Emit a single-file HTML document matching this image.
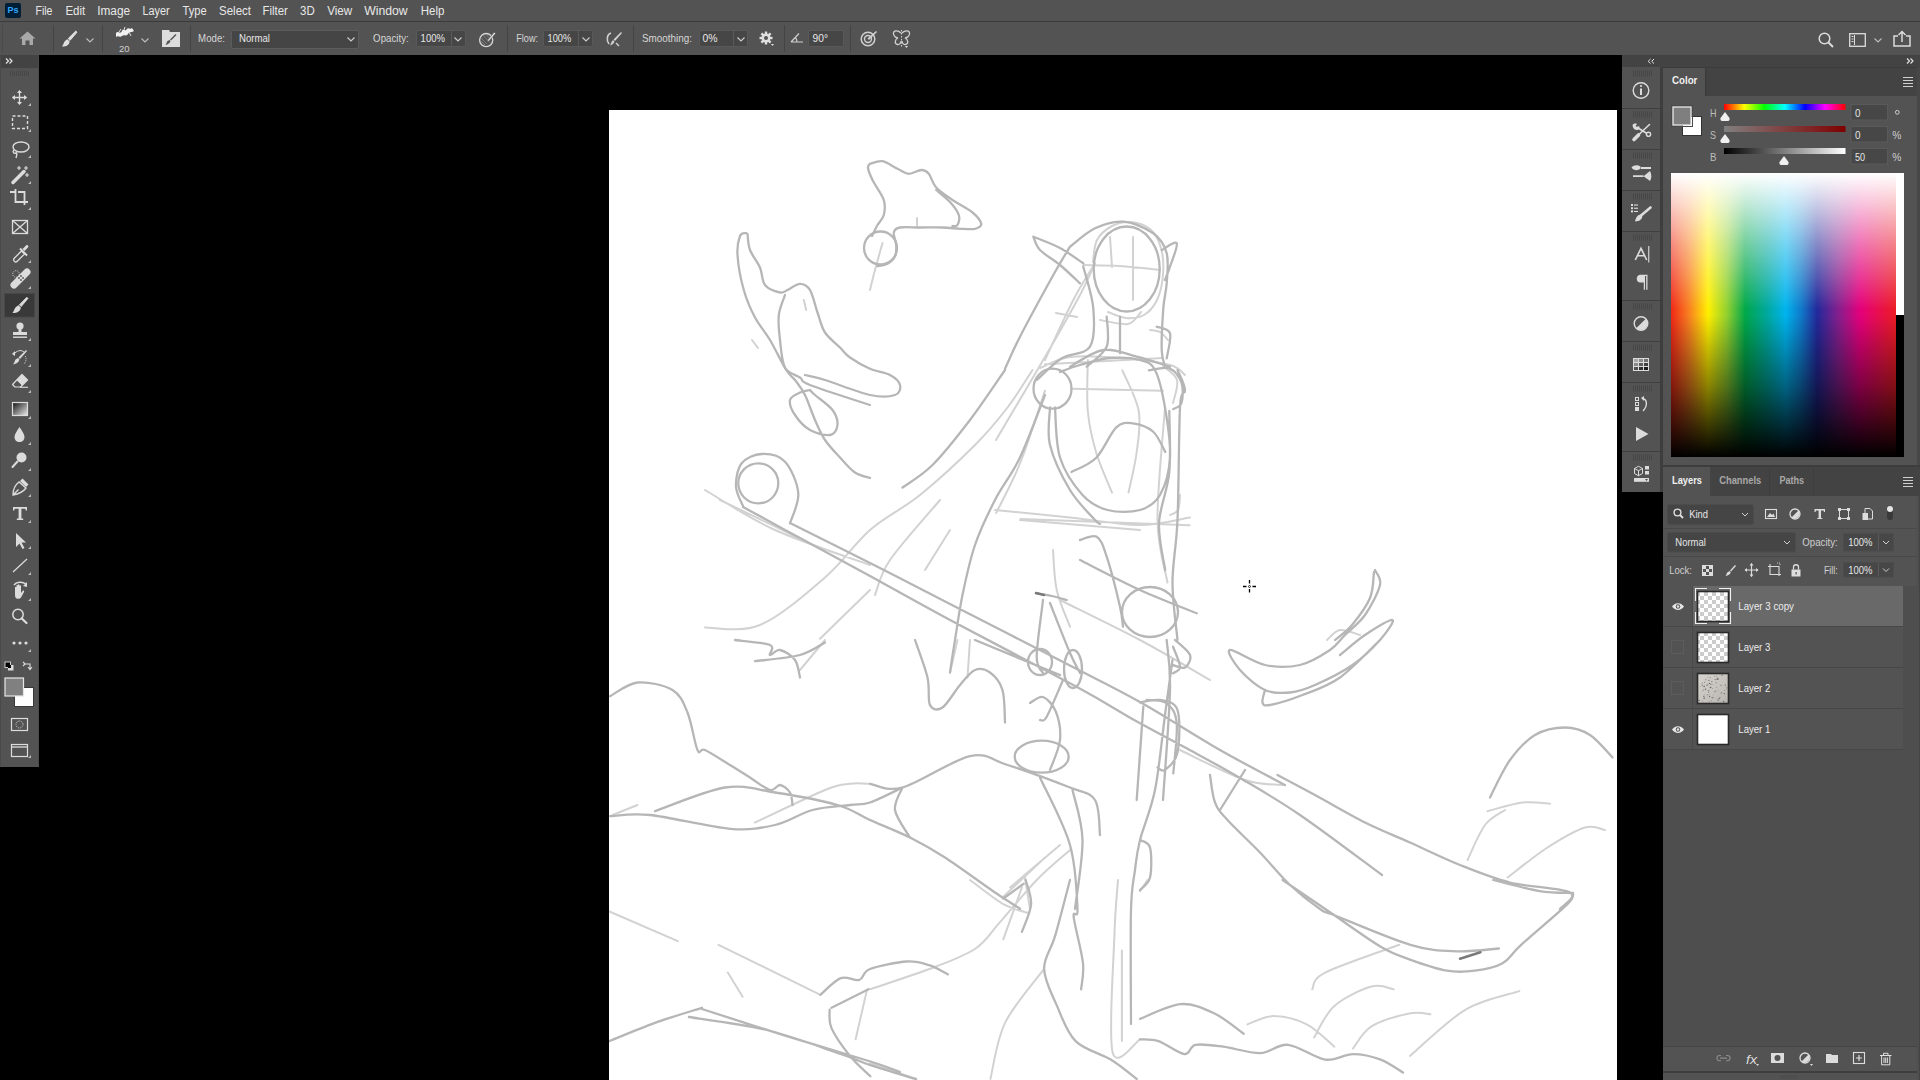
<!DOCTYPE html>
<html><head><meta charset="utf-8">
<style>
*{margin:0;padding:0;box-sizing:border-box}
html,body{width:1920px;height:1080px;overflow:hidden;background:#000;font-family:"Liberation Sans",sans-serif;}
.a{position:absolute}
#menubar{left:0;top:0;width:1920px;height:21px;background:#535353}
#menubar span{position:absolute;top:4px;font-size:12.5px;color:#e8e8e8;line-height:14px}
#sepline{left:0;top:21px;width:1920px;height:1px;background:#3b3b3b}
#opts{left:0;top:22px;width:1920px;height:33px;background:#535353}
.vsep{position:absolute;top:3px;width:1px;height:27px;background:#444}
.lbl{position:absolute;font-size:11.5px;color:#d6d6d6;line-height:13px}
.box{position:absolute;background:#454545;border:1px solid #4a4a4a;border-radius:2px}
#tools{left:0;top:55px;width:38px;height:711px;background:#535353}
#toolshead{left:0;top:55px;width:38px;height:12px;background:#434343}
#strip{left:1622px;top:55px;width:38px;height:437px;background:#535353}
#striphead{left:1622px;top:55px;width:298px;height:12px;background:#434343}
#panel{left:1663px;top:67px;width:257px;height:1013px;background:#535353}
.tabhdr{position:absolute;background:#434343}
.tabx{position:absolute;font-size:11px;line-height:13px;color:#a9a9a9;font-weight:bold}
</style></head><body>
<!-- menu -->
<div id="menubar" class="a">
  <div class="a" style="left:5px;top:3px;width:16px;height:15px;background:#001e36;border-radius:2px"></div>
  <div class="a" style="left:6px;top:4px;width:14px;font-size:9px;font-weight:bold;color:#31a8ff;line-height:13px;text-align:center">Ps</div>
<svg class="a" style="left:0;top:0" width="460" height="21"><g font-family="Liberation Sans" font-size="12.5" fill="#e8e8e8"><text x="35.5" y="15" textLength="16.9" lengthAdjust="spacingAndGlyphs">File</text><text x="65.4" y="15" textLength="19.8" lengthAdjust="spacingAndGlyphs">Edit</text><text x="97.2" y="15" textLength="33" lengthAdjust="spacingAndGlyphs">Image</text><text x="142.5" y="15" textLength="27.2" lengthAdjust="spacingAndGlyphs">Layer</text><text x="182.5" y="15" textLength="24.1" lengthAdjust="spacingAndGlyphs">Type</text><text x="219" y="15" textLength="32" lengthAdjust="spacingAndGlyphs">Select</text><text x="262.5" y="15" textLength="25.3" lengthAdjust="spacingAndGlyphs">Filter</text><text x="300" y="15" textLength="14.7" lengthAdjust="spacingAndGlyphs">3D</text><text x="327.2" y="15" textLength="25" lengthAdjust="spacingAndGlyphs">View</text><text x="364.2" y="15" textLength="43.5" lengthAdjust="spacingAndGlyphs">Window</text><text x="420.7" y="15" textLength="23.7" lengthAdjust="spacingAndGlyphs">Help</text></g></svg>
</div>
<div id="sepline" class="a"></div>
<div id="opts" class="a">
  <div class="vsep" style="left:2px;background:#4a4a4a"></div>
  <svg class="a" style="left:19px;top:9px" width="17" height="15" viewBox="0 0 17 15"><path d="M8.5 0.5 L16.5 7.5 L14 7.5 L14 14 L10.5 14 L10.5 9.5 L6.5 9.5 L6.5 14 L3 14 L3 7.5 L0.5 7.5 Z" fill="#a8a8a8"/></svg>
  <div class="vsep" style="left:53px"></div>
  <svg class="a" style="left:61px;top:8px" width="17" height="17" viewBox="0 0 17 17"><path d="M14.8 1 L16 2.2 L9 10.4 L7.2 8.6 Z" fill="#e0e0e0" stroke="#e0e0e0" stroke-width="0.9" stroke-linejoin="round"/><path d="M6.4 9.2 L8.6 11.4 C8.4 14.6 5.6 16.6 1 16.6 C2.2 15.2 2.6 12.8 3.8 11.3 C4.6 10.3 5.4 9.5 6.4 9.2 Z" fill="#e0e0e0"/></svg>
  <svg class="a" style="left:86px;top:16px" width="8" height="5" viewBox="0 0 8 5"><path d="M0.5 0.5 L4 4 L7.5 0.5" stroke="#bdbdbd" stroke-width="1.1" fill="none"/></svg>
  <div class="vsep" style="left:102px"></div>
  <svg class="a" style="left:115px;top:4px" width="20" height="13" viewBox="0 0 20 13"><path d="M1 7 C3 4 5 9 7 5 C8 2 10 6 12 3 C13 1 15 4 17 2 L19 5 C16 7 15 5 13 8 C11 11 9 8 7 10 C5 12 3 9 1 11 Z" fill="#f0f0f0"/><path d="M4 6 L6 3 M9 4 L10 1 M14 6 L16 10" stroke="#e0e0e0" stroke-width="1"/></svg>
  <div class="a" style="left:119px;top:22px;font-size:9.5px;color:#d0d0d0;line-height:10px">20</div>
  <svg class="a" style="left:141px;top:16px" width="8" height="5" viewBox="0 0 8 5"><path d="M0.5 0.5 L4 4 L7.5 0.5" stroke="#bdbdbd" stroke-width="1.1" fill="none"/></svg>
  <svg class="a" style="left:162px;top:8px" width="18" height="17" viewBox="0 0 18 17"><path d="M0 0 L7 0 L8 2 L18 2 L18 17 L0 17 Z" fill="#dcdcdc"/><path d="M13.5 4 L14.5 5 L9 10.5 L8 9.5 Z" fill="#555"/><path d="M7.5 10 L8.5 11 C8 13 6 14.5 3.5 15 C4.5 14 4.5 12 5.5 11 C6 10.5 6.8 10.2 7.5 10 Z" fill="#555"/></svg>
  <div class="vsep" style="left:190px"></div>
  <div class="box" style="left:231px;top:8px;width:128px;height:19px;background:#454545;border-color:#5c5c5c"></div>
  <svg class="a" style="left:347px;top:15px" width="8" height="5" viewBox="0 0 8 5"><path d="M0.5 0.5 L4 4 L7.5 0.5" stroke="#cfcfcf" stroke-width="1.1" fill="none"/></svg>
  <div class="box" style="left:416px;top:7.5px;width:50px;height:17px;background:#464646;border-color:#595959"></div>
  <div class="a" style="left:451px;top:9px;width:1px;height:15px;background:#5a5a5a"></div>
  <svg class="a" style="left:454px;top:15px" width="8" height="5" viewBox="0 0 8 5"><path d="M0.5 0.5 L4 4 L7.5 0.5" stroke="#cfcfcf" stroke-width="1.1" fill="none"/></svg>
  <svg class="a" style="left:477px;top:8px" width="20" height="19" viewBox="0 0 20 19"><circle cx="9.2" cy="10.1" r="6.6" stroke="#d6d6d6" stroke-width="1.3" fill="none"/><g stroke="#9a9a9a" stroke-width="0.6"><path d="M4 8 L10 14 M4 11 L8 15 M6 5.5 L13 12.5 M9 4.5 L14 9.5"/></g><path d="M17.2 2.2 L18.6 3.6 L12 11 L10.2 11.8 L10.8 9.8 Z" fill="#e0e0e0" stroke="#535353" stroke-width="0.5"/></svg>
  <div class="vsep" style="left:507px"></div>
  <div class="box" style="left:543px;top:7.5px;width:50px;height:17px;background:#464646;border-color:#595959"></div>
  <div class="a" style="left:578px;top:9px;width:1px;height:15px;background:#5a5a5a"></div>
  <svg class="a" style="left:582px;top:15px" width="8" height="5" viewBox="0 0 8 5"><path d="M0.5 0.5 L4 4 L7.5 0.5" stroke="#cfcfcf" stroke-width="1.1" fill="none"/></svg>
  <svg class="a" style="left:605px;top:9px" width="18" height="16" viewBox="0 0 18 16"><path d="M6 2 C2 3 1 9 4 13" stroke="#d0d0d0" stroke-width="1.6" fill="none"/><path d="M16 1 L17 2 L10 10 L8.5 8.5 Z" fill="#d0d0d0"/><path d="M8 9 L9.5 10.5 C9 12.5 7 14 5 14.5 C5.8 13.5 6 11.5 6.8 10.5 Z" fill="#d0d0d0"/><path d="M11 12 L14 15" stroke="#d0d0d0" stroke-width="1.4"/></svg>
  <div class="vsep" style="left:633px"></div>
  <div class="box" style="left:699px;top:7.5px;width:49px;height:17px;background:#464646;border-color:#595959"></div>
  <div class="a" style="left:733px;top:9px;width:1px;height:15px;background:#5a5a5a"></div>
  <svg class="a" style="left:737px;top:15px" width="8" height="5" viewBox="0 0 8 5"><path d="M0.5 0.5 L4 4 L7.5 0.5" stroke="#cfcfcf" stroke-width="1.1" fill="none"/></svg>
  <svg class="a" style="left:759px;top:9px" width="16" height="16" viewBox="0 0 16 16"><g fill="#e0e0e0"><circle cx="7" cy="7" r="4.5"/><rect x="5.8" y="0.5" width="2.4" height="13"/><rect x="0.5" y="5.8" width="13" height="2.4"/><rect x="5.8" y="0.5" width="2.4" height="13" transform="rotate(45 7 7)"/><rect x="5.8" y="0.5" width="2.4" height="13" transform="rotate(-45 7 7)"/></g><circle cx="7" cy="7" r="2" fill="#535353"/><path d="M12 13 L15 13 L13.5 15 Z" fill="#e0e0e0"/></svg>
  <div class="vsep" style="left:784px"></div>
  <svg class="a" style="left:790px;top:10px" width="14" height="11" viewBox="0 0 14 11"><path d="M1 10 L13 10 M1 10 L9 1.5 M7 10 C7 7.5 6 6 5 5.2" stroke="#d0d0d0" stroke-width="1.2" fill="none"/></svg>
  <div class="box" style="left:808px;top:7.5px;width:36px;height:17px;background:#464646;border-color:#595959"></div>
  <div class="vsep" style="left:850px"></div>
  <svg class="a" style="left:860px;top:8px" width="18" height="17" viewBox="0 0 18 17"><circle cx="8" cy="9" r="6.8" stroke="#d0d0d0" stroke-width="1.5" fill="none"/><circle cx="8" cy="9" r="3.5" stroke="#d0d0d0" stroke-width="1.4" fill="none"/><path d="M16 1 L17 2 L9 10 L7.5 8.5 Z" fill="#d0d0d0"/></svg>
  <svg class="a" style="left:892px;top:8px" width="19" height="18" viewBox="0 0 19 18"><path d="M9 3 C6 0 1 0 1.5 4 C2 7 5 8 6 8 C3 9 2 14 5.5 14.5 C7.5 15 9 13 9 11" stroke="#d0d0d0" stroke-width="1.3" fill="none"/><path d="M10 3 C13 0 18 0 17.5 4 C17 7 14 8 13 8 C16 9 17 14 13.5 14.5 C11.5 15 10 13 10 11" stroke="#d0d0d0" stroke-width="1.3" fill="none"/><path d="M9.5 0 L9.5 17" stroke="#d0d0d0" stroke-width="1" stroke-dasharray="1.5 1.5"/><path d="M13 16 L16 16 L14.5 18 Z" fill="#e0e0e0"/></svg>
  <svg class="a" style="left:1818px;top:10px" width="16" height="16" viewBox="0 0 16 16"><circle cx="6.5" cy="6.5" r="5.3" stroke="#dcdcdc" stroke-width="1.5" fill="none"/><path d="M10.5 10.5 L15 15" stroke="#dcdcdc" stroke-width="2"/></svg>
  <svg class="a" style="left:1849px;top:11px" width="17" height="14" viewBox="0 0 17 14"><rect x="0.7" y="0.7" width="15.6" height="12.6" stroke="#dcdcdc" stroke-width="1.3" fill="none"/><path d="M2.5 3.5 L4.5 3.5 M2.5 6 L4.5 6 M2.5 8.5 L4.5 8.5 M5.5 2 L5.5 12" stroke="#dcdcdc" stroke-width="1"/></svg>
  <svg class="a" style="left:1874px;top:16px" width="8" height="5" viewBox="0 0 8 5"><path d="M0.5 0.5 L4 4 L7.5 0.5" stroke="#bdbdbd" stroke-width="1.1" fill="none"/></svg>
  <svg class="a" style="left:1893px;top:8px" width="18" height="17" viewBox="0 0 18 17"><path d="M5 6 L1 6 L1 16 L17 16 L17 6 L13 6" stroke="#dcdcdc" stroke-width="1.5" fill="none"/><path d="M9 12 L9 1.5 M5.5 5 L9 1.5 L12.5 5" stroke="#dcdcdc" stroke-width="1.5" fill="none"/></svg>
  <svg class="a" style="left:0;top:0" width="900" height="33"><g font-family="Liberation Sans" font-size="10.4"><text x="198.1" y="20" textLength="26.9" lengthAdjust="spacingAndGlyphs" fill="#d6d6d6">Mode:</text><text x="239" y="20" textLength="31" lengthAdjust="spacingAndGlyphs" fill="#e6e6e6">Normal</text><text x="373.1" y="20" textLength="35.6" lengthAdjust="spacingAndGlyphs" fill="#d6d6d6">Opacity:</text><text x="420.6" y="20" textLength="24.4" lengthAdjust="spacingAndGlyphs" fill="#e6e6e6">100%</text><text x="516.25" y="20" textLength="21.75" lengthAdjust="spacingAndGlyphs" fill="#d6d6d6">Flow:</text><text x="547.5" y="20" textLength="23.75" lengthAdjust="spacingAndGlyphs" fill="#e6e6e6">100%</text><text x="642" y="20" textLength="50" lengthAdjust="spacingAndGlyphs" fill="#d6d6d6">Smoothing:</text><text x="702.5" y="20" textLength="15" lengthAdjust="spacingAndGlyphs" fill="#e6e6e6">0%</text><text x="812.5" y="20" textLength="15.5" lengthAdjust="spacingAndGlyphs" fill="#e6e6e6">90°</text></g></svg>
</div>
<svg class="a" style="left:0;top:55px" width="39" height="712" viewBox="0 55 39 712">
<rect x="0" y="55" width="39" height="712" fill="#535353"/>
<rect x="0" y="55" width="39" height="13" fill="#434343"/>
<rect x="38" y="55" width="1" height="711" fill="#4a4a4a"/>
<rect x="0" y="55" width="1" height="711" fill="#4a4a4a"/>
<path d="M6 58.5 L8.5 61 L6 63.5 M9.5 58.5 L12 61 L9.5 63.5" stroke="#e6e6e6" stroke-width="1.2" fill="none"/>
<g stroke="#474747" stroke-width="1"><path d="M10.5 71 V76 M12.5 71 V76 M14.5 71 V76 M16.5 71 V76 M18.5 71 V76 M20.5 71 V76 M22.5 71 V76 M24.5 71 V76 M26.5 71 V76 M28.5 71 V76"/></g>
<g fill="#dcdcdc" stroke="none">
<!-- corner triangles -->
<path d="M31 103 L31 106 L28 106 Z M31 129 L31 132 L28 132 Z M31 155 L31 158 L28 158 Z M31 181 L31 184 L28 184 Z M31 207 L31 210 L28 210 Z M31 260 L31 263 L28 263 Z M31 286 L31 289 L28 289 Z M31 312 L31 315 L28 315 Z M31 338 L31 341 L28 341 Z M31 364 L31 367 L28 367 Z M31 390 L31 393 L28 393 Z M31 416 L31 419 L28 419 Z M31 442 L31 445 L28 445 Z M31 468 L31 471 L28 471 Z M31 494 L31 497 L28 497 Z M31 520 L31 523 L28 523 Z M31 546 L31 549 L28 549 Z M31 572 L31 575 L28 575 Z M31 598 L31 601 L28 601 Z M31 649 L31 652 L28 652 Z M31 755 L31 758 L28 758 Z" fill="#bcbcbc"/>
</g>
<!-- move -->
<g stroke="#dcdcdc" stroke-width="1.3" fill="none"><path d="M19.5 91 V104 M12.5 97.5 H26.5"/></g>
<g fill="#dcdcdc"><path d="M19.5 90 L22 93 L17 93 Z M19.5 105 L22 102 L17 102 Z M12 97.5 L15 95 L15 100 Z M27 97.5 L24 95 L24 100 Z"/></g>
<!-- marquee -->
<rect x="12.5" y="116" width="15" height="12.5" stroke="#dcdcdc" stroke-width="1.4" fill="none" stroke-dasharray="3 2"/>
<!-- lasso -->
<g stroke="#dcdcdc" stroke-width="1.4" fill="none"><ellipse cx="21" cy="147" rx="8" ry="5"/><path d="M14 150 C12 152 14 154 16 153 C17 152 17 155 16 158"/></g>
<!-- magic wand -->
<path d="M13 182.5 L24 171.5" stroke="#dcdcdc" stroke-width="3.5" stroke-linecap="round"/>
<g stroke="#dcdcdc" stroke-width="1.1"><path d="M19 166 V170 M17 168 H21 M26 166 V170 M24 168 H28 M27 173 V177 M25 175 H29"/></g>
<!-- crop -->
<g stroke="#dcdcdc" stroke-width="1.8" fill="none"><path d="M10 192 H16 M15.5 189 V202 H25 M18 192 H24.5 V205 M24.5 202 H28"/></g>
<!-- frame -->
<g stroke="#dcdcdc" stroke-width="1.3" fill="none"><rect x="12.5" y="220.5" width="15" height="13"/><path d="M12.5 220.5 L27.5 233.5 M27.5 220.5 L12.5 233.5"/></g>
<!-- eyedropper -->
<g transform="translate(0.5,3)">
<path d="M14 258.5 C12.8 257.3 13 256 14 255 L21 248 L24 251 L17 258 C16 259 14.9 259.3 14 258.5 Z" stroke="#dcdcdc" stroke-width="1.3" fill="none"/>
<path d="M22 246 L25.5 242.5 C26.8 241.2 28.8 243.2 27.5 244.5 L24 248 Z" fill="#dcdcdc"/>
<path d="M19.5 245.5 L26.5 252.5" stroke="#dcdcdc" stroke-width="2"/>
</g>
<!-- healing -->
<path d="M14 285 L27 272" stroke="#dcdcdc" stroke-width="7" stroke-linecap="round" fill="none"/>
<g fill="#535353"><circle cx="19" cy="278" r="0.9"/><circle cx="21" cy="280" r="0.9"/><circle cx="21" cy="276" r="0.9"/><circle cx="23" cy="278" r="0.9"/></g>
<circle cx="16" cy="274" r="3.3" stroke="#dcdcdc" stroke-width="0.9" stroke-dasharray="1 1" fill="none"/>
<!-- brush selected -->
<rect x="4.5" y="293.5" width="30" height="23.5" fill="#393939" stroke="#474747" stroke-width="1"/>
<path d="M26.8 297.2 L28 298.4 L21.2 306.6 L19.4 304.8 Z" fill="#dcdcdc" stroke="#dcdcdc" stroke-width="0.8" stroke-linejoin="round"/>
<path d="M18.6 305.2 L20.8 307.4 C20.6 310.8 17.8 313 12.5 313 C13.8 311.5 14.2 309 15.5 307.5 C16.4 306.4 17.4 305.6 18.6 305.2 Z" fill="#dcdcdc"/>
<!-- stamp -->
<g fill="#dcdcdc"><circle cx="20" cy="326" r="3.6"/><rect x="18.5" y="328" width="3" height="4"/><path d="M13 332 H27 V335 H13 Z"/><rect x="13" y="336.5" width="14" height="1.4"/></g>
<!-- history brush -->
<path d="M26 350 L27 351 L20 359 L18.5 357.5 Z" fill="#dcdcdc"/>
<path d="M18 358 L19.5 359.5 C19 362 16.5 364 13 364.5 C14.5 363 14.5 361 15.5 359.5 Z" fill="#dcdcdc"/>
<path d="M12 354 L15 351 L15 356 Z" fill="#dcdcdc"/><path d="M15 353 C18 350 22 350 24 352" stroke="#dcdcdc" stroke-width="1" fill="none"/>
<path d="M25 356 C27 358 26 362 24 364" stroke="#dcdcdc" stroke-width="0.9" stroke-dasharray="1 1" fill="none"/>
<!-- eraser -->
<path d="M22 374.5 L27.5 380 L20.5 387 L15 387 L12.5 384.5 Z" fill="none" stroke="#dcdcdc" stroke-width="1.2" stroke-linejoin="round"/>
<path d="M22 374.5 L27.5 380 L22 385.5 L16.5 380 Z" fill="#dcdcdc"/>
<path d="M20 387.3 H28" stroke="#dcdcdc" stroke-width="1.1"/>
<!-- gradient -->
<defs><linearGradient id="gr" x1="0" y1="0" x2="1" y2="1"><stop offset="0" stop-color="#111"/><stop offset="1" stop-color="#eee"/></linearGradient></defs>
<rect x="12.5" y="402.5" width="15" height="13" fill="url(#gr)" stroke="#dcdcdc" stroke-width="1.2"/>
<!-- blur drop -->
<path d="M19.5 427 C22 431 24.5 434 24.5 437 C24.5 440 22.3 442 19.5 442 C16.7 442 14.5 440 14.5 437 C14.5 434 17 431 19.5 427 Z" fill="#dcdcdc"/>
<!-- dodge -->
<circle cx="21.5" cy="457.5" r="5" fill="#dcdcdc"/><path d="M17.5 461.5 L12.5 467" stroke="#dcdcdc" stroke-width="2" stroke-linecap="round"/>
<!-- pen -->
<path d="M13 495 C13 489 15 485 19 482 L26 488 C23 492 19 494 13 495 Z M13 495 L18.5 489.5" stroke="#dcdcdc" stroke-width="1.4" fill="none"/>
<path d="M20 481 L22.5 478.5 L28.5 484.5 L26 487 Z" fill="#dcdcdc"/>
<!-- type T -->
<path d="M13 507 H27 V510.5 H25.8 L25.2 508.8 H21.4 V518.5 H23.2 V520 H16.8 V518.5 H18.6 V508.8 H14.8 L14.2 510.5 H13 Z" fill="#dcdcdc"/>
<!-- path select arrow -->
<path d="M16 533 L16 547 L19.5 543.5 L22.5 549 L24.5 548 L21.5 542.5 L26 542.5 Z" fill="#dcdcdc"/>
<!-- line -->
<path d="M13 572 L27 559" stroke="#dcdcdc" stroke-width="1.2"/>
<!-- rotate/hand -->
<path d="M14 585 C16 582 22 581 26 584" stroke="#dcdcdc" stroke-width="1.4" fill="none"/><path d="M27 582 L27 587 L23 586 Z" fill="#dcdcdc"/>
<path d="M15 592 L15 587.5 C15 586.5 16.5 586.5 16.5 587.5 L16.5 591 L16.5 585.5 C16.5 584.5 18 584.5 18 585.5 L18 591 L18 585 C18 584 19.5 584 19.5 585 L19.5 591 L19.5 586 C19.5 585 21 585 21 586 L21 593 L22.5 591 C23.5 590 24.5 591 24 592 L21 597.5 C20 599 18 599 16.5 598.5 C15 597.5 15 596 15 592 Z" fill="#dcdcdc"/>
<!-- zoom -->
<circle cx="18" cy="614.5" r="5.2" stroke="#dcdcdc" stroke-width="1.5" fill="none"/><path d="M21.8 618.5 L26.5 623" stroke="#dcdcdc" stroke-width="2.2" stroke-linecap="round"/>
<!-- more -->
<g fill="#dcdcdc"><circle cx="14" cy="643" r="1.6"/><circle cx="20" cy="643" r="1.6"/><circle cx="26" cy="643" r="1.6"/></g>
<!-- default colors -->
<rect x="5" y="662" width="5.5" height="5.5" fill="#000" stroke="#dcdcdc" stroke-width="0.9"/><rect x="8" y="665" width="5.5" height="5.5" fill="#dcdcdc"/><rect x="8" y="665" width="3" height="3" fill="#000"/>
<path d="M23 662 L25 664 H30 V669 M28 667 L30 669.5 L32 667 M25 664 L23 666" stroke="#dcdcdc" stroke-width="1.1" fill="none"/>
<!-- swatches -->
<rect x="14.5" y="687.5" width="19" height="19" fill="#fff" stroke="#3a3a3a" stroke-width="1"/>
<rect x="5" y="678" width="18.5" height="18" fill="#808080" stroke="#e6e6e6" stroke-width="1.2"/>
<!-- quick mask -->
<rect x="11.5" y="718.5" width="16" height="12" stroke="#dcdcdc" stroke-width="1.2" fill="none"/><circle cx="19.5" cy="724.5" r="3.5" stroke="#dcdcdc" stroke-width="0.9" stroke-dasharray="1 1" fill="none"/>
<!-- screen mode -->
<rect x="11.5" y="744.5" width="16" height="12" stroke="#dcdcdc" stroke-width="1.2" fill="none"/><path d="M11.5 747 H27.5" stroke="#dcdcdc" stroke-width="1.3"/>
</svg>
<!-- canvas -->
<svg id="sketch" class="a" style="left:609px;top:110px" width="1008" height="970" viewBox="609 110 1008 970">
<rect x="609" y="110" width="1008" height="970" fill="#fff"/>
<g fill="none" stroke-linecap="round" stroke-linejoin="round">
<path d="M803.8 300.0L806.2 310.0M752.0 340.0L758.0 348.0M882.5 243.0C881.2 247.5 877.1 262.2 875.0 270.0C872.9 277.8 870.8 286.7 870.0 290.0M917.0 218.0L917.0 226.0M1045.0 360.0C1049.7 350.0 1065.0 316.1 1073.3 300.0C1081.6 283.9 1091.4 269.4 1095.0 263.3M1083.3 265.0C1089.4 265.2 1107.2 265.2 1120.0 266.0C1132.8 266.8 1153.3 269.3 1160.0 270.0M1110.0 237.0L1112.0 267.0M1133.0 237.0L1133.0 300.0M1056.0 313.0L1077.0 317.0M995.0 510.0C1007.5 511.2 1045.8 515.0 1070.0 517.5C1094.2 520.0 1120.0 525.0 1140.0 525.0C1160.0 525.0 1181.7 518.8 1190.0 517.5M1020.0 520.0L1140.0 530.0M1165.0 407.5C1163.8 426.2 1157.1 490.8 1157.5 520.0C1157.9 549.2 1165.8 572.1 1167.5 582.5M1180.0 495.0C1179.7 497.5 1179.7 506.7 1178.0 510.0C1176.3 513.3 1171.3 514.2 1170.0 515.0M1032.5 370.0C1028.3 376.2 1017.1 395.0 1007.5 407.5C997.9 420.0 989.6 430.4 975.0 445.0C960.4 459.6 937.5 480.8 920.0 495.0C902.5 509.2 885.8 516.2 870.0 530.0C854.2 543.8 843.3 561.7 825.0 577.5C806.7 593.3 780.0 616.7 760.0 625.0C740.0 633.3 714.2 627.1 705.0 627.5M950.0 530.0L925.0 570.0M940.0 500.0C931.7 510.0 900.8 544.2 890.0 560.0C879.2 575.8 877.5 589.2 875.0 595.0M820.0 638.8L870.0 590.0M1180.0 750.0C1190.8 755.0 1227.5 774.2 1245.0 780.0C1262.5 785.8 1278.3 784.2 1285.0 785.0M705.0 490.0C716.7 496.7 747.5 517.5 775.0 530.0C802.5 542.5 854.2 559.2 870.0 565.0M1327.0 640.0C1329.2 638.3 1334.5 630.8 1340.0 630.0C1345.5 629.2 1356.7 634.2 1360.0 635.0M957.5 640.0L950.0 672.5M970.0 640.0L967.5 677.5M1312.2 989.3C1314.4 986.5 1310.7 980.0 1325.2 972.6C1339.7 965.2 1387.0 949.4 1399.3 944.8M1314.1 1037.4C1317.5 1032.2 1324.8 1014.4 1334.4 1005.9C1344.0 997.4 1361.6 989.3 1371.5 986.5C1381.4 983.7 1390.0 988.8 1393.7 989.3M1353.0 1048.5C1356.1 1044.8 1361.9 1032.2 1371.5 1026.3C1381.1 1020.4 1400.6 1015.3 1410.4 1013.3C1420.2 1011.3 1427.1 1014.1 1430.4 1014.3M1410.0 1055.9C1419.3 1048.2 1447.4 1020.4 1465.6 1009.6C1483.8 998.8 1510.3 994.2 1519.3 991.1M1487.5 811.2C1493.3 809.8 1512.1 803.8 1522.5 802.5C1532.9 801.2 1545.4 803.5 1550.0 803.8M1467.5 860.0C1470.4 854.2 1478.8 833.3 1485.0 825.0C1491.2 816.7 1501.7 812.5 1505.0 810.0M1507.5 877.5C1514.2 872.5 1534.6 855.8 1547.5 847.5C1560.4 839.2 1575.4 830.4 1585.0 827.5C1594.6 824.6 1601.7 829.6 1605.0 830.0M755.0 822.5C766.7 817.1 809.2 796.5 825.0 790.0C840.8 783.5 842.5 784.8 850.0 783.8C857.5 782.7 866.7 783.8 870.0 783.8M800.0 670.0L825.0 640.0M612.5 815.0L637.5 805.0M870.0 820.0L910.0 837.5M1010.0 887.5L1060.0 845.0M1002.5 897.5L1045.0 857.5M1025.0 877.5L1030.0 909.0M609.3 911.5L677.8 941.1M718.5 944.8L820.4 994.8M727.8 972.6L742.6 996.7M866.7 991.1L855.6 1039.3M870.0 989.3C880.8 985.6 917.2 973.8 934.8 967.0C952.4 960.2 964.8 955.9 975.6 948.5C986.4 941.1 989.4 934.0 999.6 922.6C1009.8 911.2 1025.0 892.1 1036.7 880.0C1048.4 867.9 1064.5 855.0 1070.0 850.0M970.0 880.0C975.5 884.0 993.4 898.6 1003.3 904.1C1013.2 909.6 1025.0 911.8 1029.3 913.3M1021.9 887.4L1003.3 939.3M1044.1 968.9C1037.6 977.9 1014.2 1004.2 1005.2 1022.6C996.2 1041.0 992.9 1069.6 990.4 1079.0M1118.0 880.0C1117.4 889.3 1115.3 906.9 1114.4 935.6C1113.5 964.3 1108.3 1034.9 1112.6 1052.2C1116.9 1069.5 1135.4 1041.5 1140.0 1039.3M1121.9 950.4L1121.9 1041.1M870.0 1063.3L916.3 1079.0M1247.4 1024.4C1251.7 1023.0 1263.4 1016.1 1273.3 1016.1C1283.2 1016.1 1296.5 1019.3 1306.7 1024.4C1316.9 1029.5 1329.8 1043.0 1334.4 1046.7M1140.0 891.1L1147.4 880.0M1163.0 366.0C1165.3 368.3 1175.3 373.8 1177.0 380.0C1178.7 386.2 1173.7 399.2 1173.0 403.0M1087.8 360.0C1087.8 368.5 1086.4 395.7 1087.8 411.0C1089.2 426.3 1092.0 438.4 1096.0 452.0C1100.0 465.6 1109.3 485.8 1112.0 492.6M1122.4 370.4C1125.1 377.2 1136.3 397.4 1138.7 411.0C1141.1 424.6 1138.4 438.4 1136.7 452.0C1135.0 465.6 1129.9 485.8 1128.5 492.6M1045.0 364.3L1163.0 358.1M1071.5 388.7L1163.0 390.7M1020.6 519.0L1189.6 525.2M1045.0 390.7C1040.9 402.6 1028.8 441.6 1020.6 462.0C1012.5 482.4 1000.2 504.5 996.1 513.0M720.0 500.0L803.0 540.0M1053.0 550.0C1053.6 556.7 1053.9 577.2 1056.7 590.0C1059.5 602.8 1067.8 620.6 1070.0 626.7M1060.0 600.0C1073.3 606.7 1115.0 626.7 1140.0 640.0C1165.0 653.3 1198.3 673.3 1210.0 680.0M1093.0 262.0C1093.7 258.3 1093.8 246.0 1097.0 240.0C1100.2 234.0 1106.5 229.0 1112.0 226.0C1117.5 223.0 1123.7 221.5 1130.0 222.0C1136.3 222.5 1144.8 224.7 1150.0 229.0C1155.2 233.3 1158.8 240.3 1161.0 248.0C1163.2 255.7 1163.7 266.3 1163.0 275.0C1162.3 283.7 1160.2 293.3 1157.0 300.0C1153.8 306.7 1149.2 312.0 1144.0 315.0C1138.8 318.0 1132.0 318.5 1126.0 318.0C1120.0 317.5 1111.0 313.0 1108.0 312.0M996.0 440.0C1005.3 424.2 1038.0 369.2 1052.0 345.0C1066.0 320.8 1073.3 307.5 1080.0 295.0C1086.7 282.5 1090.0 274.2 1092.0 270.0M1141.0 312.0C1138.8 314.0 1134.8 322.7 1128.0 324.0C1121.2 325.3 1104.7 320.7 1100.0 320.0M1040.0 368.0C1045.0 366.2 1056.7 358.7 1070.0 357.0C1083.3 355.3 1103.3 356.7 1120.0 358.0C1136.7 359.3 1159.2 362.2 1170.0 365.0C1180.8 367.8 1182.5 373.3 1185.0 375.0M1150.0 330.0C1151.7 330.3 1157.0 330.3 1160.0 332.0C1163.0 333.7 1166.7 338.7 1168.0 340.0" stroke="#d2d2d2" stroke-width="2"/>
<path d="M746.0 233.0C745.0 233.5 741.4 232.3 740.0 236.0C738.6 239.7 736.9 246.0 737.5 255.0C738.1 264.0 740.8 279.6 743.8 290.0C746.7 300.4 750.6 309.2 755.0 317.5C759.4 325.8 764.8 331.2 770.0 340.0C775.2 348.8 782.1 363.3 786.2 370.0C790.4 376.7 791.9 375.8 795.0 380.0C798.1 384.2 801.7 388.3 805.0 395.0C808.3 401.7 811.7 412.5 815.0 420.0C818.3 427.5 820.8 433.8 825.0 440.0C829.2 446.2 835.0 452.1 840.0 457.5C845.0 462.9 850.0 469.1 855.0 472.5C860.0 475.9 867.5 477.1 870.0 478.0M747.5 233.8C747.9 236.5 747.9 244.4 750.0 250.0C752.1 255.6 757.5 261.7 760.0 267.5C762.5 273.3 761.7 280.8 765.0 285.0C768.3 289.2 776.2 291.7 780.0 292.5C783.8 293.3 784.2 291.5 787.5 290.0C790.8 288.5 796.2 283.8 800.0 283.8C803.8 283.8 807.1 285.2 810.0 290.0C812.9 294.8 815.0 305.4 817.5 312.5C820.0 319.6 821.2 326.7 825.0 332.5C828.8 338.3 835.8 343.3 840.0 347.5C844.2 351.7 845.0 354.0 850.0 357.5C855.0 361.0 863.3 365.8 870.0 368.8C876.7 371.7 885.0 372.3 890.0 375.0C895.0 377.7 899.2 381.7 900.0 385.0C900.8 388.3 900.0 393.3 895.0 395.0C890.0 396.7 881.7 397.5 870.0 395.0C858.3 392.5 835.8 383.3 825.0 380.0C814.2 376.7 808.3 375.8 805.0 375.0M785.0 295.0C784.0 298.3 779.6 307.5 778.8 315.0C777.9 322.5 779.0 331.2 780.0 340.0C781.0 348.8 781.7 361.2 785.0 367.5C788.3 373.8 795.8 374.6 800.0 377.5C804.2 380.4 798.3 380.4 810.0 385.0C821.7 389.6 860.0 401.7 870.0 405.0M810.0 390.0C808.3 390.4 803.3 390.8 800.0 392.5C796.7 394.2 790.8 396.2 790.0 400.0C789.2 403.8 791.7 410.0 795.0 415.0C798.3 420.0 804.2 426.7 810.0 430.0C815.8 433.3 825.4 435.8 830.0 435.0C834.6 434.2 837.1 429.2 837.5 425.0C837.9 420.8 836.2 415.0 832.5 410.0C828.8 405.0 818.8 398.3 815.0 395.0C811.2 391.7 810.8 390.8 810.0 390.0M870.0 163.8C872.1 163.3 877.9 160.4 882.5 161.2C887.1 162.1 893.1 166.7 897.5 168.8C901.9 170.8 904.8 173.5 908.8 173.8C912.7 174.0 917.9 170.0 921.2 170.0C924.6 170.0 926.2 170.8 928.8 173.8C931.2 176.7 932.3 183.1 936.2 187.5C940.2 191.9 946.5 195.8 952.5 200.0C958.5 204.2 967.7 208.5 972.5 212.5C977.3 216.5 980.8 221.0 981.2 223.8C981.7 226.5 978.5 227.9 975.0 228.8C971.5 229.6 965.4 229.0 960.0 228.8C954.6 228.5 949.2 227.7 942.5 227.5C935.8 227.3 927.1 227.5 920.0 227.5C912.9 227.5 904.4 226.7 900.0 227.5C895.6 228.3 894.4 229.6 893.8 232.5C893.1 235.4 896.0 241.0 896.2 245.0C896.5 249.0 896.5 253.1 895.0 256.2C893.5 259.4 890.4 262.1 887.5 263.8C884.6 265.4 879.2 265.8 877.5 266.2M870.0 163.8C869.7 164.5 867.6 165.3 868.0 168.0C868.4 170.7 869.9 174.7 872.5 180.0C875.1 185.3 881.9 194.2 883.8 200.0C885.6 205.8 884.8 210.8 883.8 215.0C882.7 219.2 879.5 221.5 877.5 225.0C875.5 228.5 872.9 234.2 872.0 236.0M936.2 190.0C938.5 192.0 946.2 197.8 950.0 202.0C953.8 206.2 957.5 211.2 958.8 215.0C960.0 218.8 958.5 223.2 957.5 225.0C956.5 226.8 953.3 225.8 952.5 226.0M1070.0 246.7C1074.2 243.6 1086.1 232.5 1095.0 228.3C1103.9 224.1 1113.6 220.9 1123.3 221.7C1133.0 222.5 1146.1 228.0 1153.3 233.3C1160.5 238.6 1164.5 245.0 1166.7 253.3C1168.9 261.6 1167.3 274.1 1166.7 283.3C1166.1 292.5 1164.1 297.2 1163.3 308.3C1162.5 319.4 1161.4 340.3 1161.7 350.0C1162.0 359.7 1164.5 363.9 1165.0 366.7M1033.3 236.7C1037.8 238.6 1051.7 243.6 1060.0 248.0C1068.3 252.4 1079.4 260.8 1083.3 263.3M1033.3 236.7C1034.4 238.9 1035.5 245.3 1040.0 250.0C1044.5 254.7 1053.3 259.4 1060.0 265.0C1066.7 270.6 1076.7 280.2 1080.0 283.3M1161.7 250.0C1164.2 248.9 1175.3 240.5 1176.7 243.3C1178.1 246.1 1172.0 260.6 1170.0 266.7C1168.0 272.8 1165.8 277.8 1165.0 280.0M1005.0 368.8C1007.5 363.4 1012.0 352.3 1020.0 336.7C1028.0 321.1 1045.0 290.0 1053.3 275.0C1061.6 260.0 1067.2 251.4 1070.0 246.7M1083.3 266.7C1085.0 273.6 1092.2 295.0 1093.3 308.3C1094.4 321.6 1095.3 338.4 1090.0 346.7C1084.7 355.0 1070.6 352.8 1061.7 358.3C1052.8 363.9 1040.9 376.4 1036.7 380.0M1106.7 316.7C1106.7 321.7 1110.0 338.4 1106.7 346.7C1103.4 355.0 1090.0 363.4 1086.7 366.7M1120.0 316.7L1120.0 353.3M1070.0 366.7C1075.5 363.9 1092.2 351.7 1103.3 350.0C1114.4 348.3 1125.6 353.9 1136.7 356.7C1147.8 359.5 1164.5 365.0 1170.0 366.7M1156.7 326.7C1158.9 327.8 1168.3 328.0 1170.0 333.3C1171.7 338.6 1167.2 354.1 1166.7 358.3M1045.0 395.0C1040.8 405.4 1028.3 440.0 1020.0 457.5C1011.7 475.0 1002.5 485.4 995.0 500.0C987.5 514.6 980.4 529.2 975.0 545.0C969.6 560.8 965.8 579.2 962.5 595.0C959.2 610.8 957.1 627.1 955.0 640.0C952.9 652.9 950.8 667.1 950.0 672.5M1050.0 407.5C1050.0 413.8 1046.7 431.2 1050.0 445.0C1053.3 458.8 1062.5 477.5 1070.0 490.0C1077.5 502.5 1090.0 514.4 1095.0 520.0C1100.0 525.6 1099.2 523.1 1100.0 523.8M1055.0 407.5C1055.8 415.8 1055.4 442.9 1060.0 457.5C1064.6 472.1 1074.6 486.2 1082.5 495.0C1090.4 503.8 1097.9 507.5 1107.5 510.0C1117.1 512.5 1131.2 512.5 1140.0 510.0C1148.8 507.5 1155.0 503.8 1160.0 495.0C1165.0 486.2 1169.2 472.1 1170.0 457.5C1170.8 442.9 1167.5 422.1 1165.0 407.5C1162.5 392.9 1159.2 377.9 1155.0 370.0C1150.8 362.1 1147.5 362.0 1140.0 360.0C1132.5 358.0 1120.0 357.2 1110.0 358.0C1100.0 358.8 1088.3 362.7 1080.0 365.0C1071.7 367.3 1063.3 370.8 1060.0 372.0M1177.5 370.0C1178.8 373.3 1184.6 383.8 1185.0 390.0C1185.4 396.2 1181.2 385.8 1180.0 407.5C1178.8 429.2 1178.8 490.8 1177.5 520.0C1176.2 549.2 1172.5 562.5 1172.5 582.5C1172.5 602.5 1176.7 630.4 1177.5 640.0M1005.0 370.0C999.2 378.3 982.1 404.2 970.0 420.0C957.9 435.8 943.8 453.8 932.5 465.0C921.2 476.2 907.5 483.8 902.5 487.5M1375.0 570.0C1375.8 572.5 1381.7 577.5 1380.0 585.0C1378.3 592.5 1370.8 606.7 1365.0 615.0C1359.2 623.3 1350.8 629.2 1345.0 635.0C1339.2 640.8 1337.5 645.0 1330.0 650.0C1322.5 655.0 1310.8 662.5 1300.0 665.0C1289.2 667.5 1276.7 667.5 1265.0 665.0C1253.3 662.5 1234.2 649.2 1230.0 650.0C1225.8 650.8 1234.2 663.3 1240.0 670.0C1245.8 676.7 1256.7 686.2 1265.0 690.0C1273.3 693.8 1281.7 693.3 1290.0 692.5C1298.3 691.7 1304.6 689.6 1315.0 685.0C1325.4 680.4 1341.7 672.5 1352.5 665.0C1363.3 657.5 1373.3 647.5 1380.0 640.0C1386.7 632.5 1395.0 620.8 1392.5 620.0C1390.0 619.2 1373.8 629.2 1365.0 635.0C1356.2 640.8 1344.2 651.7 1340.0 655.0M1374.0 572.0C1373.3 576.3 1373.7 589.2 1370.0 598.0C1366.3 606.8 1357.8 618.0 1352.0 625.0C1346.2 632.0 1337.8 637.5 1335.0 640.0M1265.0 690.0C1264.6 692.1 1261.7 700.0 1262.5 702.5C1263.3 705.0 1263.3 706.2 1270.0 705.0C1276.7 703.8 1290.8 699.6 1302.5 695.0C1314.2 690.4 1327.1 686.7 1340.0 677.5C1352.9 668.3 1373.3 646.2 1380.0 640.0M975.0 640.0L1060.0 675.0M915.0 640.0C917.1 646.2 925.0 666.7 927.5 677.5C930.0 688.3 927.5 700.0 930.0 705.0C932.5 710.0 937.5 710.8 942.5 707.5C947.5 704.2 954.6 691.2 960.0 685.0C965.4 678.8 970.0 672.1 975.0 670.0C980.0 667.9 985.4 669.2 990.0 672.5C994.6 675.8 1000.0 681.7 1002.5 690.0C1005.0 698.3 1004.6 717.1 1005.0 722.5M1172.5 660.0C1171.2 669.2 1167.9 693.3 1165.0 715.0C1162.1 736.7 1159.2 769.2 1155.0 790.0C1150.8 810.8 1143.3 826.7 1140.0 840.0C1136.7 853.3 1136.5 858.3 1135.0 870.0C1133.5 881.7 1131.7 884.3 1131.0 910.0C1130.3 935.7 1131.0 1005.0 1131.0 1024.0M1175.0 640.0C1177.5 642.5 1188.3 650.4 1190.0 655.0C1191.7 659.6 1187.9 665.8 1185.0 667.5C1182.1 669.2 1174.6 665.4 1172.5 665.0M1140.0 702.5C1143.3 702.1 1153.8 698.8 1160.0 700.0C1166.2 701.2 1174.6 701.2 1177.5 710.0C1180.4 718.8 1179.6 742.5 1177.5 752.5C1175.4 762.5 1168.3 767.5 1165.0 770.0C1161.7 772.5 1158.8 767.9 1157.5 767.5M1140.0 840.0C1141.7 841.2 1148.3 841.2 1150.0 847.5C1151.7 853.8 1151.7 870.4 1150.0 877.5C1148.3 884.6 1141.7 887.9 1140.0 890.0M1277.5 775.0C1283.8 778.3 1300.4 787.1 1315.0 795.0C1329.6 802.9 1349.2 814.6 1365.0 822.5C1380.8 830.4 1394.2 835.4 1410.0 842.5C1425.8 849.6 1443.3 858.3 1460.0 865.0C1476.7 871.7 1491.7 877.9 1510.0 882.5C1528.3 887.1 1561.7 888.1 1570.0 892.5C1578.3 896.9 1561.7 906.2 1560.0 909.0M1210.0 775.0C1210.8 779.6 1212.1 795.0 1215.0 802.5C1217.9 810.0 1220.0 811.7 1227.5 820.0C1235.0 828.3 1249.6 841.7 1260.0 852.5C1270.4 863.3 1280.0 875.6 1290.0 885.0C1300.0 894.4 1312.6 904.0 1320.0 909.0C1327.4 914.0 1319.3 909.2 1334.4 915.2C1349.5 921.2 1390.1 938.8 1410.4 944.8C1430.7 950.8 1441.5 950.7 1456.3 951.3C1471.0 951.9 1491.8 949.0 1498.9 948.5M1334.4 915.2C1342.1 920.5 1368.1 939.3 1380.7 946.7C1393.3 954.1 1399.0 955.6 1410.0 959.6C1421.0 963.6 1436.2 968.9 1447.0 970.7C1457.8 972.6 1465.5 971.9 1474.8 970.7C1484.1 969.5 1494.9 967.6 1502.6 963.3C1510.3 959.0 1510.3 954.7 1521.1 944.8C1531.9 934.9 1558.8 912.7 1567.4 904.1C1576.1 895.5 1572.1 894.9 1573.0 893.0M1493.3 880.0C1501.0 881.9 1526.3 888.9 1539.6 891.1C1552.9 893.3 1567.4 892.7 1573.0 893.0M1282.6 880.0L1334.4 915.2M1245.0 770.0L1220.0 810.0M1490.0 797.5C1493.3 791.2 1502.5 770.4 1510.0 760.0C1517.5 749.6 1525.8 740.4 1535.0 735.0C1544.2 729.6 1555.8 727.5 1565.0 727.5C1574.2 727.5 1582.1 730.0 1590.0 735.0C1597.9 740.0 1608.8 753.8 1612.5 757.5M610.0 696.2C614.6 694.0 627.1 683.5 637.5 682.5C647.9 681.5 664.2 685.0 672.5 690.0C680.8 695.0 683.3 702.5 687.5 712.5C691.7 722.5 694.6 743.8 697.5 750.0C700.4 756.2 699.6 747.5 705.0 750.0C710.4 752.5 722.5 760.4 730.0 765.0C737.5 769.6 743.3 773.3 750.0 777.5C756.7 781.7 765.0 788.8 770.0 790.0C775.0 791.2 776.7 784.6 780.0 785.0C783.3 785.4 787.9 789.2 790.0 792.5C792.1 795.8 792.1 802.9 792.5 805.0M655.0 811.2C666.7 807.3 705.0 790.6 725.0 787.5C745.0 784.4 756.2 789.6 775.0 792.5C793.8 795.4 821.7 800.4 837.5 805.0C853.3 809.6 857.9 814.6 870.0 820.0C882.1 825.4 897.5 831.2 910.0 837.5C922.5 843.8 930.8 848.3 945.0 857.5C959.2 866.7 982.5 884.0 995.0 892.5C1007.5 901.0 1015.8 906.0 1020.0 908.8M610.0 816.2C616.7 816.0 630.0 812.9 650.0 815.0C670.0 817.1 709.2 827.1 730.0 828.8C750.8 830.4 761.2 828.1 775.0 825.0C788.8 821.9 800.0 813.3 812.5 810.0C825.0 806.7 840.4 806.2 850.0 805.0C859.6 803.8 861.2 805.4 870.0 802.5C878.8 799.6 897.1 790.0 902.5 787.5M735.0 640.0C740.8 640.8 764.2 642.5 770.0 645.0C775.8 647.5 768.3 654.2 770.0 655.0C771.7 655.8 775.8 649.2 780.0 650.0C784.2 650.8 791.7 655.4 795.0 660.0C798.3 664.6 799.2 674.6 800.0 677.5M755.0 661.2C762.5 660.2 788.3 658.1 800.0 655.0C811.7 651.9 820.8 644.6 825.0 642.5M870.0 783.8C875.4 784.4 885.8 792.1 902.5 787.5C919.2 782.9 952.5 760.0 970.0 756.2C987.5 752.5 990.8 759.8 1007.5 765.0C1024.2 770.2 1055.4 781.7 1070.0 787.5C1084.6 793.3 1090.0 792.1 1095.0 800.0C1100.0 807.9 1099.2 829.2 1100.0 835.0M902.5 787.5C901.2 791.2 893.8 801.7 895.0 810.0C896.2 818.3 907.5 832.9 910.0 837.5M1040.0 777.5C1045.0 788.8 1063.8 823.1 1070.0 845.0C1076.2 866.9 1076.9 897.0 1077.5 909.0C1078.1 921.0 1072.8 908.0 1073.7 917.0C1074.6 926.0 1081.8 951.2 1083.0 963.3C1084.2 975.3 1081.4 985.0 1081.1 989.3M1072.5 790.0C1074.2 798.3 1082.1 820.2 1082.5 840.0C1082.9 859.8 1076.2 897.5 1075.0 909.0M609.3 1041.1C617.0 1038.0 640.2 1028.2 655.6 1022.6C671.0 1017.1 694.2 1010.3 701.9 1007.8M688.9 1017.0C701.9 1019.2 741.4 1023.8 766.7 1030.0C792.0 1036.2 823.4 1048.1 840.7 1054.0C858.0 1059.9 857.9 1061.0 870.4 1065.2C882.9 1069.4 908.4 1076.7 916.0 1079.0M701.9 1009.0C715.8 1013.4 756.9 1026.8 785.0 1035.6C813.1 1044.3 851.2 1055.4 870.4 1061.5C889.6 1067.6 895.1 1070.2 900.0 1072.0M820.4 994.8C823.8 992.0 834.2 980.6 840.7 978.1C847.2 975.6 854.4 981.5 859.3 980.0C864.2 978.5 862.0 972.1 870.0 969.0C878.0 965.9 897.1 962.1 907.0 961.5C916.9 960.9 922.5 963.1 929.3 965.2C936.1 967.4 944.7 972.9 947.8 974.4M831.5 1007.8L868.5 989.3M829.6 1009.6C829.9 1012.7 828.1 1020.4 831.5 1028.1C834.9 1035.8 843.5 1047.9 850.0 1055.9C856.5 1063.9 867.0 1072.9 870.4 1076.3M1025.6 880.0C1026.5 884.0 1031.7 895.5 1031.1 904.1C1030.5 912.8 1023.4 927.3 1021.9 931.9M1003.3 898.5L1023.7 883.7M1070.0 880.0C1067.5 889.3 1059.5 920.8 1055.2 935.6C1050.9 950.4 1043.8 957.2 1044.1 968.9C1044.4 980.6 1051.8 993.9 1057.0 1005.9C1062.2 1017.9 1066.6 1032.1 1075.6 1041.1C1084.5 1050.0 1100.5 1053.3 1110.7 1059.6C1120.9 1065.9 1132.4 1075.8 1136.7 1079.0M1140.0 1018.9C1146.8 1016.4 1168.4 1005.0 1180.7 1004.1C1193.0 1003.2 1203.6 1008.4 1214.1 1013.3C1224.6 1018.2 1238.8 1030.3 1243.7 1033.7M1140.0 1039.3C1143.1 1039.6 1151.1 1038.6 1158.5 1041.1C1165.9 1043.6 1178.2 1053.5 1184.4 1054.1C1190.6 1054.7 1189.1 1046.0 1195.6 1044.8C1202.1 1043.6 1212.5 1045.3 1223.3 1046.7C1234.1 1048.1 1249.6 1053.4 1260.4 1053.1C1271.2 1052.8 1277.3 1043.7 1288.1 1044.8C1298.9 1045.9 1314.4 1058.0 1325.2 1059.6C1336.0 1061.1 1343.8 1054.1 1353.0 1054.1C1362.2 1054.1 1372.4 1056.5 1380.7 1059.6C1389.0 1062.7 1399.3 1070.4 1403.0 1072.6M1148.9 370.4C1152.3 370.0 1163.9 366.3 1169.3 368.3C1174.7 370.3 1179.5 376.8 1181.5 382.6C1183.5 388.4 1182.9 398.6 1181.5 403.0C1180.1 407.4 1174.7 408.0 1173.3 409.0M1071.5 472.0C1075.6 469.7 1088.5 465.4 1096.0 458.0C1103.5 450.6 1110.2 433.2 1116.3 427.4C1122.4 421.6 1126.5 422.6 1132.6 423.3C1138.7 424.0 1147.6 426.7 1153.0 431.5C1158.4 436.3 1163.2 448.5 1165.2 451.9M1169.3 411.0C1169.3 421.2 1171.0 453.5 1169.3 472.2C1167.6 490.9 1159.7 506.9 1159.0 523.2C1158.3 539.5 1164.2 562.2 1165.2 570.0M790.0 523.3C791.4 518.3 799.1 503.6 798.3 493.3C797.5 483.0 791.1 468.2 785.0 461.7C778.9 455.1 768.9 453.7 761.7 454.0C754.5 454.3 746.0 457.9 741.7 463.3C737.4 468.8 735.7 479.5 736.0 486.7C736.3 493.9 742.1 503.4 743.3 506.7M790.0 523.0C803.3 529.7 843.3 549.5 870.0 563.0C896.7 576.5 917.2 587.2 950.0 604.0C982.8 620.8 1035.3 647.7 1067.0 664.0C1098.7 680.3 1114.5 687.7 1140.0 702.0C1165.5 716.3 1195.8 736.2 1220.0 750.0C1244.2 763.8 1274.2 779.2 1285.0 785.0M743.0 507.0C752.5 512.2 778.8 526.5 800.0 538.0C821.2 549.5 845.0 562.3 870.0 576.0C895.0 589.7 915.5 601.5 950.0 620.0C984.5 638.5 1046.0 670.2 1077.0 687.0C1108.0 703.8 1117.5 710.7 1136.0 721.0C1154.5 731.3 1170.7 739.5 1188.0 749.0C1205.3 758.5 1221.3 767.0 1240.0 778.0C1258.7 789.0 1276.3 798.8 1300.0 815.0C1323.7 831.2 1368.3 865.0 1382.0 875.0M1036.7 593.3C1039.2 593.8 1047.0 594.9 1052.0 596.0C1057.0 597.1 1064.2 599.3 1066.7 600.0M1043.0 600.0C1042.0 609.5 1036.7 644.5 1036.7 656.7C1036.7 668.9 1042.0 670.3 1043.0 673.0M1050.0 603.0C1053.3 611.3 1065.0 641.3 1070.0 653.0C1075.0 664.7 1078.3 669.7 1080.0 673.0M1063.0 680.0C1060.3 686.1 1050.5 710.0 1046.7 716.7C1042.9 723.4 1041.1 719.5 1040.0 720.0M1030.0 703.0C1032.2 702.0 1038.7 695.5 1043.0 697.0C1047.3 698.5 1053.2 704.8 1056.0 712.0C1058.8 719.2 1061.0 730.3 1060.0 740.0C1059.0 749.7 1051.7 765.0 1050.0 770.0M1080.0 540.0C1082.8 539.5 1092.2 533.9 1096.7 536.7C1101.2 539.5 1102.8 545.0 1106.7 556.7C1110.6 568.4 1117.3 595.0 1120.0 606.7C1122.7 618.4 1122.5 623.4 1123.0 626.7M1080.0 560.0C1090.0 565.0 1120.5 581.1 1140.0 590.0C1159.5 598.9 1187.2 609.4 1196.7 613.3M1166.7 640.0C1167.2 648.3 1170.6 663.3 1170.0 690.0C1169.4 716.7 1164.2 781.7 1163.0 800.0M1173.0 646.7C1174.2 650.0 1180.0 662.3 1180.0 666.7C1180.0 671.1 1174.2 672.2 1173.0 673.3M1146.7 700.0C1150.0 700.5 1161.7 699.4 1166.7 703.3C1171.7 707.2 1175.6 711.6 1176.7 723.3C1177.8 735.0 1173.9 765.0 1173.3 773.3M1143.3 706.7L1136.7 800.0" stroke="#b6b6b6" stroke-width="2.3"/>
<path d="M1460.0 958.7L1480.4 952.2M1036.0 593.0L1044.0 595.0" stroke="#7a7a7a" stroke-width="2.5"/>
<ellipse cx="1126.7" cy="269" rx="33" ry="42.5" stroke="#b6b6b6" stroke-width="2.3"/><ellipse cx="1052.5" cy="388.7" rx="19" ry="20" stroke="#b6b6b6" stroke-width="2.3"/><ellipse cx="758.3" cy="483.3" rx="20" ry="20" stroke="#b6b6b6" stroke-width="2.3"/><ellipse cx="1073" cy="669" rx="9" ry="19" stroke="#b6b6b6" stroke-width="2.3"/><ellipse cx="880.5" cy="248" rx="16.5" ry="16.5" stroke="#b6b6b6" stroke-width="2.3"/><ellipse cx="1040" cy="662" rx="12" ry="13" stroke="#b6b6b6" stroke-width="2.3"/><ellipse cx="1041.7" cy="756.7" rx="27" ry="16" stroke="#b6b6b6" stroke-width="2.3"/><ellipse cx="1150" cy="612" rx="28" ry="25" stroke="#b6b6b6" stroke-width="2.3"/>
</g>
<path d="M1249.5 580 V583.5 M1249.5 589 V592.5 M1243 586.5 H1246.5 M1252.5 586.5 H1256" stroke="#000" stroke-width="1.3"/>
<circle cx="1249.5" cy="586.5" r="1" fill="none" stroke="#000" stroke-width="0.8"/>
</svg>
<!-- right strip -->
<svg class="a" style="left:1617px;top:55px" width="303" height="437" viewBox="1617 55 303 437">
<rect x="1622" y="55" width="298" height="12" fill="#434343"/>
<rect x="1622" y="67" width="38" height="425" fill="#535353"/>
<rect x="1660" y="67" width="3" height="425" fill="#3e3e3e"/>
<path d="M1650.5 59 L1648.2 61.3 L1650.5 63.6 M1654 59 L1651.7 61.3 L1654 63.6" stroke="#e6e6e6" stroke-width="1" fill="none"/>
<path d="M1907 58.5 L1909.5 61 L1907 63.5 M1910.5 58.5 L1913 61 L1910.5 63.5" stroke="#e6e6e6" stroke-width="1.1" fill="none"/>
<rect x="1622" y="108" width="38" height="1" fill="#3f3f3f"/><rect x="1622" y="149" width="38" height="1" fill="#3f3f3f"/><rect x="1622" y="190" width="38" height="1" fill="#3f3f3f"/><rect x="1622" y="231" width="38" height="1" fill="#3f3f3f"/><rect x="1622" y="300" width="38" height="1" fill="#3f3f3f"/><rect x="1622" y="341" width="38" height="1" fill="#3f3f3f"/><rect x="1622" y="382" width="38" height="1" fill="#3f3f3f"/><rect x="1622" y="451" width="38" height="1" fill="#3f3f3f"/>
<g stroke="#474747" stroke-width="1"><path d="M1633.5 70.5 V76.5 M1635.5 70.5 V76.5 M1637.5 70.5 V76.5 M1639.5 70.5 V76.5 M1641.5 70.5 V76.5 M1643.5 70.5 V76.5 M1645.5 70.5 V76.5 M1647.5 70.5 V76.5 M1649.5 70.5 V76.5 M1651.5 70.5 V76.5"/></g><g stroke="#474747" stroke-width="1"><path d="M1633.5 111.5 V117.5 M1635.5 111.5 V117.5 M1637.5 111.5 V117.5 M1639.5 111.5 V117.5 M1641.5 111.5 V117.5 M1643.5 111.5 V117.5 M1645.5 111.5 V117.5 M1647.5 111.5 V117.5 M1649.5 111.5 V117.5 M1651.5 111.5 V117.5"/></g><g stroke="#474747" stroke-width="1"><path d="M1633.5 152.5 V158.5 M1635.5 152.5 V158.5 M1637.5 152.5 V158.5 M1639.5 152.5 V158.5 M1641.5 152.5 V158.5 M1643.5 152.5 V158.5 M1645.5 152.5 V158.5 M1647.5 152.5 V158.5 M1649.5 152.5 V158.5 M1651.5 152.5 V158.5"/></g><g stroke="#474747" stroke-width="1"><path d="M1633.5 193.5 V199.5 M1635.5 193.5 V199.5 M1637.5 193.5 V199.5 M1639.5 193.5 V199.5 M1641.5 193.5 V199.5 M1643.5 193.5 V199.5 M1645.5 193.5 V199.5 M1647.5 193.5 V199.5 M1649.5 193.5 V199.5 M1651.5 193.5 V199.5"/></g><g stroke="#474747" stroke-width="1"><path d="M1633.5 234.5 V240.5 M1635.5 234.5 V240.5 M1637.5 234.5 V240.5 M1639.5 234.5 V240.5 M1641.5 234.5 V240.5 M1643.5 234.5 V240.5 M1645.5 234.5 V240.5 M1647.5 234.5 V240.5 M1649.5 234.5 V240.5 M1651.5 234.5 V240.5"/></g><g stroke="#474747" stroke-width="1"><path d="M1633.5 303.5 V309.5 M1635.5 303.5 V309.5 M1637.5 303.5 V309.5 M1639.5 303.5 V309.5 M1641.5 303.5 V309.5 M1643.5 303.5 V309.5 M1645.5 303.5 V309.5 M1647.5 303.5 V309.5 M1649.5 303.5 V309.5 M1651.5 303.5 V309.5"/></g><g stroke="#474747" stroke-width="1"><path d="M1633.5 344.5 V350.5 M1635.5 344.5 V350.5 M1637.5 344.5 V350.5 M1639.5 344.5 V350.5 M1641.5 344.5 V350.5 M1643.5 344.5 V350.5 M1645.5 344.5 V350.5 M1647.5 344.5 V350.5 M1649.5 344.5 V350.5 M1651.5 344.5 V350.5"/></g><g stroke="#474747" stroke-width="1"><path d="M1633.5 385.5 V391.5 M1635.5 385.5 V391.5 M1637.5 385.5 V391.5 M1639.5 385.5 V391.5 M1641.5 385.5 V391.5 M1643.5 385.5 V391.5 M1645.5 385.5 V391.5 M1647.5 385.5 V391.5 M1649.5 385.5 V391.5 M1651.5 385.5 V391.5"/></g><g stroke="#474747" stroke-width="1"><path d="M1633.5 454.5 V460.5 M1635.5 454.5 V460.5 M1637.5 454.5 V460.5 M1639.5 454.5 V460.5 M1641.5 454.5 V460.5 M1643.5 454.5 V460.5 M1645.5 454.5 V460.5 M1647.5 454.5 V460.5 M1649.5 454.5 V460.5 M1651.5 454.5 V460.5"/></g>
<!-- info -->
<circle cx="1641" cy="90.5" r="7.8" stroke="#dcdcdc" stroke-width="1.4" fill="none"/>
<rect x="1640" y="88.5" width="2" height="6.5" fill="#dcdcdc"/><circle cx="1641" cy="86" r="1.1" fill="#dcdcdc"/>
<!-- tools -->
<path d="M1639 134.5 L1649.5 124.5" stroke="#dcdcdc" stroke-width="1.6" stroke-linecap="round"/>
<path d="M1634 139.5 L1638.5 135" stroke="#dcdcdc" stroke-width="3.6" stroke-linecap="round"/>
<path d="M1636.5 127 L1647 133.5" stroke="#dcdcdc" stroke-width="1.6"/>
<path d="M1632.5 125.5 C1633 123.5 1635.5 123 1637 124 L1635.5 126 L1637.5 127.5 L1639 125.8 C1640 127.5 1639.5 130 1637.5 130 C1635.5 130.5 1633 129 1632.5 125.5 Z" fill="#dcdcdc"/>
<circle cx="1648.5" cy="134.3" r="2.1" stroke="#dcdcdc" stroke-width="1.4" fill="#535353"/>
<!-- adjustments sliders w/ brushes -->
<path d="M1641 168 H1651 M1633 176.2 H1643.5" stroke="#dcdcdc" stroke-width="1.8"/>
<path d="M1631.5 167.5 C1633.5 165 1637.5 164.5 1640.5 166.5 L1640.5 168.8 C1637.5 171 1633.5 170.5 1631.5 167.5 Z" fill="#dcdcdc"/>
<path d="M1643.5 176.2 L1650 171 C1651.8 174 1651.8 178.5 1650 181 Z" fill="#dcdcdc"/>
<!-- brush settings -->
<g fill="#dcdcdc"><rect x="1631" y="204" width="2" height="2"/><rect x="1631" y="207.2" width="2" height="2"/><rect x="1631" y="210.4" width="2" height="2"/><rect x="1634" y="204.5" width="4" height="1.1"/><rect x="1634" y="207.7" width="4" height="1.1"/><rect x="1634" y="210.9" width="4" height="1.1"/></g>
<path d="M1650.5 207.5 L1641 215.5" stroke="#dcdcdc" stroke-width="2.6" stroke-linecap="round"/>
<path d="M1640.5 214.5 L1642.3 216.3 C1642 219.5 1639.5 221.5 1635 221.5 C1635.5 219.5 1636 217.5 1637.5 216 C1638.5 215 1639.5 214.6 1640.5 214.5 Z" fill="#dcdcdc"/>
<!-- A| -->
<path d="M1635.3 260 L1641 248.3 L1646.7 260 M1637.3 255.8 H1644.7" stroke="#dcdcdc" stroke-width="1.6" fill="none"/>
<rect x="1648.2" y="246" width="1.1" height="16.5" fill="#dcdcdc"/>
<!-- pilcrow -->
<path d="M1643.8 274.7 H1647.5 V289.8 H1646.2 V276 H1645 V289.8 H1643.8 V282.6 H1640.5 C1635.5 282.6 1635.5 274.7 1640.5 274.7 Z" fill="#dcdcdc"/>
<!-- half circle -->
<circle cx="1641" cy="323.5" r="6.8" stroke="#dcdcdc" stroke-width="1.4" fill="none"/>
<path d="M1645.8 318.7 A6.8 6.8 0 0 1 1636.2 328.3 Z" fill="#dcdcdc"/>
<!-- grid -->
<rect x="1633.5" y="358.5" width="5" height="4" fill="#a8a8a8"/><rect x="1638.5" y="358.5" width="5" height="4" fill="#8c8c8c"/><rect x="1643.5" y="358.5" width="5" height="4" fill="#707070"/><rect x="1633.5" y="362.5" width="5" height="4" fill="#888888"/><rect x="1638.5" y="362.5" width="5" height="4" fill="#5c5c5c"/><rect x="1643.5" y="362.5" width="5" height="4" fill="#404040"/><rect x="1633.5" y="366.5" width="5" height="4" fill="#505050"/><rect x="1638.5" y="366.5" width="5" height="4" fill="#303030"/><rect x="1643.5" y="366.5" width="5" height="4" fill="#1c1c1c"/><g stroke="#dcdcdc" stroke-width="1" fill="none"><rect x="1633.5" y="358.5" width="15" height="12"/><path d="M1633.5 362.5 H1648.5 M1633.5 366.5 H1648.5 M1638.5 358.5 V370.5 M1643.5 358.5 V370.5"/></g>
<!-- history -->
<g stroke="#dcdcdc" stroke-width="1" fill="none"><rect x="1635.5" y="397.5" width="3" height="3"/><rect x="1635.5" y="402.5" width="3" height="3"/></g>
<rect x="1635" y="407" width="4" height="4" fill="#dcdcdc"/>
<path d="M1643 399 C1647 399 1648 406 1643 411" stroke="#dcdcdc" stroke-width="1.4" fill="none"/>
<path d="M1641 398 L1644 396 L1644 401 Z" fill="#dcdcdc"/>
<!-- play -->
<path d="M1636 427 L1648.5 434 L1636 441 Z" fill="#dcdcdc"/>
<!-- 3d -->
<path d="M1634.5 468.5 L1638.5 466.3 L1642.5 468.5 V473.5 L1638.5 475.7 L1634.5 473.5 Z M1634.5 468.5 L1638.5 470.7 L1642.5 468.5 M1638.5 470.7 V475.7" stroke="#dcdcdc" stroke-width="1" fill="none"/>
<rect x="1645" y="466" width="4" height="3.5" fill="#dcdcdc"/><rect x="1645" y="471" width="4" height="3.5" fill="#dcdcdc"/>
<rect x="1634" y="478" width="15" height="3.8" fill="#dcdcdc"/><path d="M1645 479 L1648 479 L1646.5 481 Z" fill="#535353"/>
</svg>
<div id="panel" class="a"></div>
<svg class="a" style="left:1663px;top:67px" width="257" height="1013" viewBox="1663 67 257 1013">
<rect x="1663" y="67" width="257" height="1013" fill="#535353"/>
<rect x="1663" y="67" width="42" height="29" fill="#535353"/>
<text x="1672" y="84.3" font-size="11" font-weight="bold" fill="#f0f0f0" font-family="Liberation Sans" textLength="25.4" lengthAdjust="spacingAndGlyphs">Color</text>
<!-- color tabs header -->
<rect x="1705" y="67" width="215" height="29" fill="#434343"/>
<rect x="1663" y="67" width="257" height="1" fill="#3a3a3a"/><rect x="1705" y="67" width="1.5" height="29" fill="#3c3c3c"/>
<rect x="1917" y="67" width="3" height="400" fill="#474747"/>
<g stroke="#d0d0d0" stroke-width="1"><path d="M1903 77.5 H1913 M1903 80.5 H1913 M1903 83.5 H1913 M1903 86.5 H1913"/></g>
<!-- swatches -->
<rect x="1682.5" y="116.5" width="19" height="19" fill="#fff" stroke="#333" stroke-width="1"/>
<rect x="1671.5" y="105.5" width="21" height="21" fill="none" stroke="#4a4a4a" stroke-width="1"/>
<rect x="1673" y="107" width="18" height="18" fill="#7f7f7f" stroke="#f0f0f0" stroke-width="1.2"/>
<defs>
<linearGradient id="hue" x1="0" x2="1"><stop offset="0" stop-color="#f00"/><stop offset=".167" stop-color="#ff0"/><stop offset=".333" stop-color="#0f0"/><stop offset=".5" stop-color="#0ff"/><stop offset=".667" stop-color="#00f"/><stop offset=".833" stop-color="#f0f"/><stop offset="1" stop-color="#f00"/></linearGradient>
<linearGradient id="sat" x1="0" x2="1"><stop offset="0" stop-color="#807f7f"/><stop offset="1" stop-color="#800000"/></linearGradient>
<linearGradient id="bri" x1="0" x2="1"><stop offset="0" stop-color="#000"/><stop offset="1" stop-color="#fff"/></linearGradient>
</defs>
<rect x="1724" y="104" width="121.5" height="6" fill="url(#hue)"/>
<rect x="1724" y="126" width="121.5" height="6" fill="url(#sat)"/>
<rect x="1724" y="148" width="121.5" height="6" fill="url(#bri)"/>
<path d="M1725 112 L1729.5 118 C1730 120 1729 121 1728 121 H1722 C1721 121 1720 120 1720.5 118 Z" fill="#f0f0f0"/>
<path d="M1725 134 L1729.5 140 C1730 142 1729 143 1728 143 H1722 C1721 143 1720 142 1720.5 140 Z" fill="#f0f0f0"/>
<path d="M1784 156 L1788.5 162 C1789 164 1788 165 1787 165 H1781 C1780 165 1779 164 1779.5 162 Z" fill="#f0f0f0"/>
<text x="1710" y="116.6" font-size="11" fill="#bdbdbd" font-family="Liberation Sans" textLength="6.5" lengthAdjust="spacingAndGlyphs">H</text>
<text x="1710" y="138.5" font-size="11" fill="#bdbdbd" font-family="Liberation Sans" textLength="6" lengthAdjust="spacingAndGlyphs">S</text>
<text x="1710" y="160.9" font-size="11" fill="#bdbdbd" font-family="Liberation Sans" textLength="6.5" lengthAdjust="spacingAndGlyphs">B</text>
<g fill="#474747" stroke="#5a5a5a" stroke-width="1"><rect x="1851" y="104.5" width="36.5" height="15.5"/><rect x="1851" y="126.5" width="36.5" height="15.5"/><rect x="1851" y="148.5" width="36.5" height="15.5"/></g>
<text x="1855" y="116.9" font-size="10.8" fill="#e6e6e6" font-family="Liberation Sans" textLength="5.5" lengthAdjust="spacingAndGlyphs">0</text>
<text x="1855" y="138.8" font-size="10.8" fill="#e6e6e6" font-family="Liberation Sans" textLength="5.5" lengthAdjust="spacingAndGlyphs">0</text>
<text x="1855" y="161" font-size="10.8" fill="#e6e6e6" font-family="Liberation Sans" textLength="10.1" lengthAdjust="spacingAndGlyphs">50</text>
<circle cx="1897.3" cy="112.3" r="1.9" stroke="#d0d0d0" stroke-width="1" fill="none"/>
<text x="1892.2" y="138.5" font-size="10.8" fill="#d0d0d0" font-family="Liberation Sans" textLength="9.1" lengthAdjust="spacingAndGlyphs">%</text>
<text x="1892.2" y="160.9" font-size="10.8" fill="#d0d0d0" font-family="Liberation Sans" textLength="9.1" lengthAdjust="spacingAndGlyphs">%</text>
<!-- color field -->
<defs>
<linearGradient id="fh" x1="0" x2="1">
<stop offset="0" stop-color="#f02818"/><stop offset=".08" stop-color="#f88020"/><stop offset=".165" stop-color="#fff000"/><stop offset=".25" stop-color="#90d030"/><stop offset=".33" stop-color="#00a84a"/><stop offset=".42" stop-color="#00a898"/><stop offset=".51" stop-color="#00b4ee"/><stop offset=".58" stop-color="#1078c8"/><stop offset=".65" stop-color="#23289a"/><stop offset=".74" stop-color="#80208e"/><stop offset=".84" stop-color="#e4007c"/><stop offset="1" stop-color="#ec1c24"/></linearGradient>
<linearGradient id="fw" x1="0" y1="0" x2="0" y2="1"><stop offset="0" stop-color="#fff" stop-opacity="1"/><stop offset=".25" stop-color="#fff" stop-opacity="0.45"/><stop offset=".48" stop-color="#fff" stop-opacity="0"/></linearGradient>
<linearGradient id="fb" x1="0" y1="0" x2="0" y2="1"><stop offset="0.5" stop-color="#000" stop-opacity="0"/><stop offset=".75" stop-color="#000" stop-opacity="0.45"/><stop offset="1" stop-color="#000" stop-opacity="1"/></linearGradient>
</defs>
<rect x="1671" y="173" width="225" height="284" fill="url(#fh)"/>
<rect x="1671" y="173" width="225" height="284" fill="url(#fw)"/>
<rect x="1671" y="173" width="225" height="284" fill="url(#fb)"/>
<rect x="1896" y="173" width="8" height="142" fill="#fff"/>
<rect x="1896" y="315" width="8" height="142" fill="#000"/>
<!-- layers tabs -->
<rect x="1663" y="465" width="257" height="3" fill="#3d3d3d"/>
<rect x="1663" y="467" width="257" height="29" fill="#434343"/>
<rect x="1663" y="467" width="47" height="29" fill="#535353"/>
<rect x="1769" y="469" width="1" height="27" fill="#3d3d3d"/>
<rect x="1813" y="469" width="1" height="27" fill="#3d3d3d"/>
<text x="1672" y="484.3" font-size="11" font-weight="bold" fill="#f0f0f0" font-family="Liberation Sans" textLength="29.9" lengthAdjust="spacingAndGlyphs">Layers</text>
<text x="1719.2" y="484.3" font-size="11" font-weight="bold" fill="#a8a8a8" font-family="Liberation Sans" textLength="42.1" lengthAdjust="spacingAndGlyphs">Channels</text>
<text x="1779.4" y="484.3" font-size="11" font-weight="bold" fill="#a8a8a8" font-family="Liberation Sans" textLength="24.8" lengthAdjust="spacingAndGlyphs">Paths</text>
<g stroke="#d0d0d0" stroke-width="1"><path d="M1903 477.5 H1913 M1903 480.5 H1913 M1903 483.5 H1913 M1903 486.5 H1913"/></g>
</svg>
<svg class="a" style="left:1663px;top:496px" width="257" height="584" viewBox="1663 496 257 584">
<defs><pattern id="chk" x="0" y="0" width="8" height="8" patternUnits="userSpaceOnUse"><rect width="8" height="8" fill="#fff"/><rect width="4" height="4" fill="#cccccc"/><rect x="4" y="4" width="4" height="4" fill="#cccccc"/></pattern>
<linearGradient id="l2" x1="0" y1="0" x2="1" y2="1"><stop offset="0" stop-color="#d8d4d0"/><stop offset="1" stop-color="#b8b4b0"/></linearGradient></defs>
<!-- kind row -->
<rect x="1667.5" y="504.5" width="86" height="20" rx="2" fill="#454545" stroke="#4c4c4c"/>
<circle cx="1677.5" cy="512.5" r="3.4" stroke="#e0e0e0" stroke-width="1.4" fill="none"/><path d="M1680 515 L1683 518" stroke="#e0e0e0" stroke-width="1.8"/>
<text x="1689.2" y="517.8" font-size="10.8" fill="#e6e6e6" font-family="Liberation Sans" textLength="18.9" lengthAdjust="spacingAndGlyphs">Kind</text>
<path d="M1742 513 L1745 516 L1748 513" stroke="#cfcfcf" stroke-width="1" fill="none"/>
<!-- filter icons -->
<rect x="1765.5" y="509.5" width="11" height="9" stroke="#dcdcdc" stroke-width="1.1" fill="none"/><path d="M1767 517 L1770 513 L1772 515 L1773.5 513.5 L1775 517 Z" fill="#dcdcdc"/>
<circle cx="1795" cy="514" r="5" stroke="#dcdcdc" stroke-width="1.3" fill="none"/><path d="M1798.5 510.5 A5 5 0 0 1 1791.5 517.5 Z" fill="#dcdcdc"/>
<path d="M1814.5 509 H1825 V512 H1824 L1823.5 510.5 H1821 V518 H1822.3 V519 H1817.3 V518 H1818.6 V510.5 H1816 L1815.5 512 H1814.5 Z" fill="#dcdcdc"/>
<rect x="1839.5" y="509.5" width="9" height="9" stroke="#dcdcdc" stroke-width="1" fill="none"/><g fill="#dcdcdc"><rect x="1838" y="508" width="3" height="3"/><rect x="1847" y="508" width="3" height="3"/><rect x="1838" y="517" width="3" height="3"/><rect x="1847" y="517" width="3" height="3"/></g>
<path d="M1865 508.5 H1870 L1872.5 511 V519 H1865 Z" stroke="#dcdcdc" stroke-width="1" fill="none"/><rect x="1862.5" y="513" width="5.5" height="7" fill="#dcdcdc"/>
<rect x="1887" y="506" width="6" height="14" rx="3" fill="#3a3a3a"/><circle cx="1890" cy="509" r="3" fill="#e6e6e6"/>
<rect x="1663" y="528" width="257" height="1" fill="#494949"/>
<!-- blend row -->
<rect x="1667.5" y="532.5" width="128" height="19.5" rx="2" fill="#454545" stroke="#4c4c4c"/>
<text x="1675.3" y="546.1" font-size="10.8" fill="#e6e6e6" font-family="Liberation Sans" textLength="30.5" lengthAdjust="spacingAndGlyphs">Normal</text>
<path d="M1784 541 L1787 544 L1790 541" stroke="#cfcfcf" stroke-width="1" fill="none"/>
<text x="1802.2" y="546.1" font-size="10.8" fill="#cfcfcf" font-family="Liberation Sans" textLength="35.6" lengthAdjust="spacingAndGlyphs">Opacity:</text>
<rect x="1843.5" y="533.5" width="50" height="17.5" fill="#474747" stroke="#4c4c4c"/>
<rect x="1878" y="534" width="1" height="16" fill="#5a5a5a"/>
<text x="1848.3" y="546.1" font-size="10.8" fill="#e6e6e6" font-family="Liberation Sans" textLength="24.2" lengthAdjust="spacingAndGlyphs">100%</text>
<path d="M1883 541 L1886 544 L1889 541" stroke="#cfcfcf" stroke-width="1" fill="none"/>
<rect x="1663" y="556" width="257" height="1" fill="#494949"/>
<!-- lock row -->
<text x="1669.2" y="573.9" font-size="10.8" fill="#cfcfcf" font-family="Liberation Sans" textLength="22.8" lengthAdjust="spacingAndGlyphs">Lock:</text>
<rect x="1702.5" y="565.5" width="10" height="10" stroke="#dcdcdc" stroke-width="1" fill="none"/><g fill="#dcdcdc"><rect x="1703" y="566" width="3" height="3"/><rect x="1709" y="566" width="3" height="3"/><rect x="1706" y="569" width="3" height="3"/><rect x="1703" y="572" width="3" height="3"/><rect x="1709" y="572" width="3" height="3"/></g>
<path d="M1735 565 L1736 566 L1731 571.5 L1730 570.5 Z" fill="#dcdcdc"/><path d="M1729.5 571 L1730.8 572.3 C1730.5 574 1728.5 575.5 1725.5 576 C1726.5 575 1726.5 573.5 1727.3 572.5 Z" fill="#dcdcdc"/>
<path d="M1751.5 563.5 V576.5 M1745 570 H1758" stroke="#dcdcdc" stroke-width="1.2"/><path d="M1751.5 563 L1753.5 565.5 H1749.5 Z M1751.5 577 L1753.5 574.5 H1749.5 Z M1744.5 570 L1747 568 V572 Z M1758.5 570 L1756 568 V572 Z" fill="#dcdcdc"/>
<path d="M1768 566.5 H1779 V576 M1770 564 V574.5 H1781" stroke="#dcdcdc" stroke-width="1.1" fill="none"/><path d="M1777 563 L1780 563 L1780 566" stroke="#dcdcdc" stroke-width="0.9" fill="none" stroke-dasharray="1 1"/>
<rect x="1791.5" y="569.5" width="9" height="7" fill="#dcdcdc"/><path d="M1793.5 569.5 V567 C1793.5 564 1798.5 564 1798.5 567 V569.5" stroke="#dcdcdc" stroke-width="1.3" fill="none"/><rect x="1795.5" y="572" width="1.2" height="2.5" fill="#535353"/>
<text x="1823.9" y="573.9" font-size="10.8" fill="#cfcfcf" font-family="Liberation Sans" textLength="13.9" lengthAdjust="spacingAndGlyphs">Fill:</text>
<rect x="1843.5" y="562.5" width="50" height="14.5" fill="#474747" stroke="#4c4c4c"/>
<rect x="1878" y="563" width="1" height="13" fill="#5a5a5a"/>
<text x="1848.3" y="573.9" font-size="10.8" fill="#e6e6e6" font-family="Liberation Sans" textLength="24.2" lengthAdjust="spacingAndGlyphs">100%</text>
<path d="M1883 568.5 L1886 571.5 L1889 568.5" stroke="#cfcfcf" stroke-width="1" fill="none"/>
<!-- rows -->
<rect x="1663" y="586" width="254" height="460" fill="#4e4e4e"/>
<rect x="1663" y="586" width="240" height="164" fill="#535353"/>
<rect x="1693" y="586" width="210" height="40" fill="#696969"/>
<rect x="1663" y="626" width="240" height="1" fill="#474747"/>
<rect x="1663" y="667" width="240" height="1" fill="#474747"/>
<rect x="1663" y="708" width="240" height="1" fill="#474747"/>
<rect x="1663" y="749" width="240" height="1" fill="#474747"/>
<rect x="1692" y="586" width="1" height="164" fill="#4a4a4a"/>
<path d="M1672 606.5 C1675 602.0 1681 602.0 1684 606.5 C1681 611.0 1675 611.0 1672 606.5 Z" fill="#e6e6e6"/><circle cx="1678" cy="606.5" r="2.2" fill="#535353"/><circle cx="1678" cy="606.5" r="1.2" fill="#e6e6e6"/>
<rect x="1671.5" y="640.5" width="12" height="13" fill="none" stroke="#5c5c5c" stroke-width="1"/>
<rect x="1671.5" y="681.5" width="12" height="13" fill="none" stroke="#5c5c5c" stroke-width="1"/>
<path d="M1672 729.5 C1675 725.0 1681 725.0 1684 729.5 C1681 734.0 1675 734.0 1672 729.5 Z" fill="#e6e6e6"/><circle cx="1678" cy="729.5" r="2.2" fill="#535353"/><circle cx="1678" cy="729.5" r="1.2" fill="#e6e6e6"/>
<!-- thumbnails -->
<rect x="1697.5" y="591.5" width="31" height="30" fill="url(#chk)" stroke="#2a2a2a" stroke-width="1.6"/>
<path d="M1695.5 601 V588.5 H1707 M1719 588.5 H1730.5 V601 M1730.5 612 V623.5 H1719 M1707 623.5 H1695.5 V612" stroke="#f0f0f0" stroke-width="1.1" fill="none"/>
<rect x="1697.5" y="632.5" width="31" height="30" fill="url(#chk)" stroke="#2a2a2a" stroke-width="1.6"/>
<rect x="1697.5" y="673.5" width="31" height="30" fill="url(#l2)" stroke="#2a2a2a" stroke-width="1.6"/>
<g fill="#6a6866"><circle cx="1703.5" cy="689.7" r="0.37"/><circle cx="1704.6" cy="697.6" r="0.43"/><circle cx="1726.9" cy="687.7" r="0.52"/><circle cx="1716.9" cy="679.1" r="0.65"/><circle cx="1713.6" cy="695.0" r="0.37"/><circle cx="1715.9" cy="691.0" r="0.52"/><circle cx="1719.1" cy="698.7" r="0.67"/><circle cx="1709.6" cy="696.6" r="0.68"/><circle cx="1710.1" cy="677.6" r="0.50"/><circle cx="1716.5" cy="683.1" r="0.49"/><circle cx="1708.8" cy="690.8" r="0.67"/><circle cx="1718.1" cy="700.1" r="0.70"/><circle cx="1717.8" cy="679.4" r="0.69"/><circle cx="1724.3" cy="690.4" r="0.42"/><circle cx="1718.2" cy="690.5" r="0.37"/><circle cx="1709.3" cy="701.7" r="0.40"/><circle cx="1707.2" cy="695.8" r="0.37"/><circle cx="1716.2" cy="676.2" r="0.47"/><circle cx="1723.7" cy="701.5" r="0.70"/><circle cx="1707.7" cy="677.1" r="0.36"/><circle cx="1704.5" cy="686.0" r="0.40"/><circle cx="1704.1" cy="698.4" r="0.69"/><circle cx="1702.3" cy="685.2" r="0.56"/><circle cx="1714.7" cy="691.7" r="0.53"/><circle cx="1707.3" cy="694.4" r="0.46"/><circle cx="1726.4" cy="689.1" r="0.35"/><circle cx="1703.8" cy="690.7" r="0.37"/><circle cx="1716.6" cy="687.6" r="0.47"/><circle cx="1704.2" cy="694.9" r="0.37"/><circle cx="1702.8" cy="701.0" r="0.46"/><circle cx="1709.5" cy="683.4" r="0.56"/><circle cx="1707.4" cy="685.2" r="0.36"/><circle cx="1709.2" cy="694.8" r="0.43"/><circle cx="1704.2" cy="686.8" r="0.39"/><circle cx="1708.0" cy="684.0" r="0.50"/><circle cx="1715.1" cy="679.6" r="0.58"/><circle cx="1711.6" cy="687.2" r="0.42"/><circle cx="1711.4" cy="697.6" r="0.45"/><circle cx="1721.6" cy="692.3" r="0.47"/><circle cx="1702.6" cy="682.9" r="0.44"/><circle cx="1700.4" cy="686.3" r="0.40"/><circle cx="1699.1" cy="700.5" r="0.70"/><circle cx="1711.2" cy="700.7" r="0.43"/><circle cx="1719.9" cy="697.6" r="0.53"/><circle cx="1712.8" cy="684.2" r="0.37"/><circle cx="1715.5" cy="682.7" r="0.37"/><circle cx="1724.3" cy="693.7" r="0.66"/><circle cx="1707.9" cy="690.6" r="0.45"/><circle cx="1705.5" cy="689.2" r="0.68"/><circle cx="1710.9" cy="684.2" r="0.62"/><circle cx="1708.9" cy="680.3" r="0.64"/><circle cx="1703.8" cy="696.4" r="0.63"/><circle cx="1722.1" cy="675.2" r="0.65"/><circle cx="1704.5" cy="682.3" r="0.53"/><circle cx="1710.8" cy="687.8" r="0.35"/><circle cx="1717.9" cy="678.4" r="0.65"/><circle cx="1712.5" cy="688.6" r="0.46"/><circle cx="1708.8" cy="692.5" r="0.48"/><circle cx="1702.0" cy="683.9" r="0.48"/><circle cx="1705.8" cy="679.8" r="0.56"/><circle cx="1720.9" cy="685.3" r="0.57"/><circle cx="1706.8" cy="685.1" r="0.59"/><circle cx="1711.9" cy="681.6" r="0.59"/><circle cx="1704.0" cy="686.5" r="0.66"/><circle cx="1725.2" cy="685.1" r="0.63"/><circle cx="1710.3" cy="687.5" r="0.66"/><circle cx="1721.2" cy="693.0" r="0.55"/><circle cx="1702.6" cy="690.9" r="0.40"/><circle cx="1714.7" cy="676.2" r="0.41"/><circle cx="1712.8" cy="697.7" r="0.65"/></g>
<rect x="1697.5" y="714.5" width="31" height="30" fill="#fff" stroke="#2a2a2a" stroke-width="1.6"/>
<text x="1738.3" y="610" font-size="10.8" fill="#ececec" font-family="Liberation Sans" textLength="55.6" lengthAdjust="spacingAndGlyphs">Layer 3 copy</text>
<text x="1738.3" y="651.1" font-size="10.8" fill="#ececec" font-family="Liberation Sans" textLength="32" lengthAdjust="spacingAndGlyphs">Layer 3</text>
<text x="1738.3" y="692" font-size="10.8" fill="#ececec" font-family="Liberation Sans" textLength="32" lengthAdjust="spacingAndGlyphs">Layer 2</text>
<text x="1738.3" y="732.8" font-size="10.8" fill="#ececec" font-family="Liberation Sans" textLength="32" lengthAdjust="spacingAndGlyphs">Layer 1</text>
<!-- right scroll gutter -->

<rect x="1917" y="467" width="2" height="613" fill="#4e4e4e"/><rect x="1919" y="467" width="1" height="613" fill="#444"/>
<!-- bottom bar -->
<rect x="1663" y="1046" width="254" height="1" fill="#454545"/>
<rect x="1663" y="1047" width="254" height="24" fill="#535353"/>
<rect x="1663" y="1071" width="254" height="2" fill="#3e3e3e"/>
<rect x="1663" y="1073" width="254" height="7" fill="#535353"/>
<g stroke="#4a4a4a" stroke-width="0.8"><path d="M1781 1075 V1079 M1783 1075 V1079 M1785 1075 V1079 M1787 1075 V1079 M1789 1075 V1079 M1791 1075 V1079 M1793 1075 V1079 M1795 1075 V1079 M1797 1075 V1079"/></g>
<!-- bottom icons -->
<g stroke="#8c8c8c" stroke-width="1.1" fill="none"><path d="M1721 1055.5 H1719.5 A2.6 2.6 0 0 0 1719.5 1060.7 H1721 M1726 1055.5 H1727.5 A2.6 2.6 0 0 1 1727.5 1060.7 H1726 M1720 1058.1 H1727"/></g>
<text x="1746" y="1063.5" font-size="12.5" font-style="italic" fill="#dcdcdc" font-family="Liberation Sans" textLength="11" lengthAdjust="spacingAndGlyphs">fx</text>
<path d="M1756 1064 L1759 1064 L1757.5 1066 Z" fill="#dcdcdc"/>
<rect x="1771" y="1053" width="13" height="10" fill="#dcdcdc"/><circle cx="1777.5" cy="1058" r="3" fill="#535353"/>
<circle cx="1805" cy="1058" r="5" fill="none" stroke="#dcdcdc" stroke-width="1.3"/><path d="M1808.5 1054.5 A5 5 0 0 1 1801.5 1061.5 Z" fill="#dcdcdc"/><path d="M1810 1064 L1813 1064 L1811.5 1066 Z" fill="#dcdcdc"/>
<path d="M1826 1054 H1831 L1832 1055 H1838 V1063 H1826 Z" fill="#dcdcdc"/>
<rect x="1853.5" y="1052.5" width="11" height="11" fill="none" stroke="#dcdcdc" stroke-width="1.1"/><path d="M1859 1055 V1061 M1856 1058 H1862" stroke="#dcdcdc" stroke-width="1.2"/>
<path d="M1880 1055.5 H1891.5 M1883.5 1055 V1053.3 H1888 V1055 M1881.6 1056 V1064.8 H1889.8 V1056 M1884 1057.5 V1063 M1885.7 1057.5 V1063 M1887.4 1057.5 V1063" stroke="#e0e0e0" stroke-width="1" fill="none"/>
</svg>
</body></html>
